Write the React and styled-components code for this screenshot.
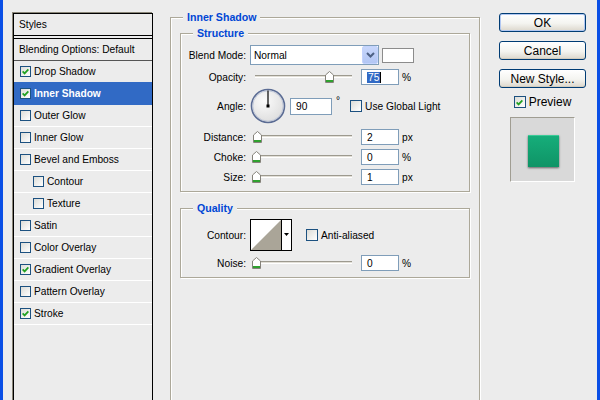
import React from "react"
import styled, { createGlobalStyle } from "styled-components"

// global
const GlobalStyle = createGlobalStyle`
  html, body {
    margin: 0;
    padding: 0;
    background: #ececec;
  }
  body {
    font-family: "Liberation Sans", Arial, sans-serif;
    font-size: 10.2px;
    color: #000;
  }
  * {
    box-sizing: border-box;
  }
`

// window frame
const Window = styled.div`
  display: flex;
  width: 600px;
  height: 400px;
  overflow: hidden;
  background: #ececec;
  border-left: 3px solid #0a4fe6;
  border-right: 3px solid #0a4fe6;
`

// styles list
const StylesColumn = styled.div`
  flex: none;
  padding: 13px 0 0 10px;
`
const ListPanel = styled.div`
  width: 140px;
  height: 420px;
  border: 1px solid #000;
  box-shadow: -1px -1px 0 #8a8678;
`
const ListHeader = styled.div`
  display: flex;
  align-items: center;
  height: 22px;
  padding-left: 5px;
  border-bottom: 1px solid #000;
  margin-bottom: 2px;
`
const ListBody = styled.div`
  border-top: 1px solid #000;
`
const ListItem = styled.div`
  display: flex;
  align-items: center;
  height: 22px;
  padding-left: ${p => (p.$plain ? 5 : p.$indent ? 19 : 6)}px;
  background: ${p => (p.$selected ? "#316ac5" : "transparent")};
  color: ${p => (p.$selected ? "#fff" : "#000")};
  font-weight: ${p => (p.$selected ? "bold" : "normal")};
  border-bottom: 1px solid
    ${p => (p.$plain ? "#555" : p.$selected ? "#316ac5" : "#fff")};
  box-shadow: ${p => (p.$selected ? "0 -1px 0 #316ac5" : "none")};
  span + span {
    margin-left: 3px;
  }
`

// checkbox
const Box = styled.span`
  display: inline-flex;
  align-items: center;
  justify-content: center;
  flex: none;
  width: ${p => p.$size}px;
  height: ${p => p.$size}px;
  border: 1px solid #1c5180;
  background: linear-gradient(135deg, #dcdcd7, #ffffff);
`
const Check = ({ checked, size = 12 }) => (
  <Box $size={size}>
    {checked && (
      <svg width="7" height="7" viewBox="0 0 7 7">
        <path
          d="M0.6 3.4 L2.6 5.4 L6.4 1.4"
          fill="none"
          stroke="#21a121"
          strokeWidth="1.8"
        />
      </svg>
    )}
  </Box>
)

// middle panel
const MainColumn = styled.div`
  flex: none;
  width: 310px;
  margin-left: 17px;
  padding-top: 17px;
`
const Group = styled.div`
  border: 1px solid #aca899;
  box-shadow: 1px 1px 0 #fff, inset 1px 1px 0 #fff;
  margin: ${p => p.$margin || "0"};
  padding-bottom: ${p => p.$bottom || 0}px;
  height: ${p => (p.$tall ? "420px" : "auto")};
`
const GroupTitle = styled.div`
  width: fit-content;
  margin: -8px 0 0 12px;
  padding: 0 4px;
  line-height: 14px;
  height: 14px;
  background: #ececec;
  color: #0046d5;
  font-weight: bold;
  font-size: 10.6px;
`
const Row = styled.div`
  display: flex;
  align-items: center;
  margin-top: ${p => p.$top}px;
  height: ${p => p.$height || 16}px;
`
const Label = styled.div`
  flex: none;
  width: 65px;
  margin-right: 4px;
  text-align: right;
`
const SelectBox = styled.div`
  display: flex;
  align-items: center;
  width: 129px;
  height: 20px;
  padding-left: 3px;
  border: 1px solid #7f9db9;
  background: #fff;
  span {
    flex: 1;
  }
`
const DropButton = styled.div`
  display: flex;
  align-items: center;
  justify-content: center;
  width: 16px;
  height: 18px;
  border: 1px solid #c3d3fd;
  border-radius: 2px;
  background: linear-gradient(#c7d6fb, #b2c6f4);
`
const Swatch = styled.div`
  width: 32px;
  height: 15px;
  margin-left: 3px;
  border: 1px solid #8c8c8c;
  background: #fff;
`
const SliderWrap = styled.div`
  position: relative;
  flex: none;
  width: 111px;
  height: 16px;
`
const Track = styled.div`
  margin: 6px 9px 0 5px;
  height: 3px;
  border-top: 1px solid #9d9a8f;
  background: #e2dfd7;
  border-bottom: 1px solid #fff;
`
const Thumb = styled.svg`
  position: absolute;
  top: ${p => p.$top}px;
`
const Field = styled.div`
  display: flex;
  align-items: center;
  flex: none;
  width: ${p => p.$width || 38}px;
  height: ${p => p.$height || 16}px;
  padding-left: 5px;
  border: 1px solid #7f9db9;
  background: #fff;
`
const Selected = styled.span`
  background: #316ac5;
  color: #fff;
  padding: 0 1px;
  line-height: 11px;
  border-right: 1px solid #000;
`
const Unit = styled.span`
  margin-left: 3px;
`
const Degree = styled.span`
  align-self: flex-start;
  margin: 8px 0 0 4px;
  line-height: 10px;
`
const CheckLabel = styled.label`
  display: flex;
  align-items: center;
  margin-left: ${p => p.$left}px;
  span + span {
    margin-left: 3px;
  }
`
const ContourPicker = styled.div`
  display: flex;
  width: 42px;
  height: 32px;
`

// right column
const ButtonColumn = styled.div`
  flex: none;
  display: flex;
  flex-direction: column;
  align-items: center;
  width: 87px;
  margin-left: 19px;
  padding-top: 13px;
  gap: 9px;
`
const Button = styled.button`
  width: 87px;
  height: 19px;
  padding: 0;
  font-family: inherit;
  font-size: 12px;
  color: #000;
  border: 1px solid #003c74;
  border-radius: 3px;
  background: linear-gradient(#ffffff, #f4f4f0 55%, #dcd7cc);
  box-shadow: ${p =>
    p.$primary ? "inset 0 0 0 1px #b2c8f2" : "inset 0 -1px 0 #d2ccbf"};
`
const PreviewCheck = styled(CheckLabel)`
  margin: -1px 0 0 0;
  height: 12px;
  font-size: 12px;
`
const PreviewBox = styled.div`
  display: flex;
  align-items: center;
  justify-content: center;
  width: 65px;
  height: 65px;
  border: 1px solid;
  border-color: #a09d92 #fff #fff #a09d92;
  background: #d9d9d9;
`
const GreenSquare = styled.div`
  width: 31px;
  height: 32px;
  margin: 3px 0 0 1px;
  border-top: 1px solid #3ccb98;
  background: linear-gradient(#16ad7a, #0f9466);
  box-shadow: 0 1px 2px rgba(0, 0, 0, 0.55);
`

const styleItems = [
  { name: "Drop Shadow", checked: true },
  { name: "Inner Shadow", checked: true, selected: true },
  { name: "Outer Glow" },
  { name: "Inner Glow" },
  { name: "Bevel and Emboss" },
  { name: "Contour", indent: true },
  { name: "Texture", indent: true },
  { name: "Satin" },
  { name: "Color Overlay" },
  { name: "Gradient Overlay", checked: true },
  { name: "Pattern Overlay" },
  { name: "Stroke", checked: true },
]

const Slider = ({ pct }) => (
  <SliderWrap>
    <Track />
    <Thumb
      $top={2}
      width="9"
      height="12"
      viewBox="0 0 9 12"
      style={{ left: 2 + pct * 97 }}
    >
      <path
        d="M0.5 4 L4.5 0.5 L8.5 4 V11.5 H0.5 Z"
        fill="#fff"
        stroke="#85827a"
      />
      <rect x="1" y="9" width="7" height="2" fill="#2fa12f" />
    </Thumb>
  </SliderWrap>
)

const SliderRow = ({ label, pct, value, unit, top }) => (
  <Row $top={top}>
    <Label>{label}</Label>
    <Slider pct={pct} />
    <Field>{value}</Field>
    <Unit>{unit}</Unit>
  </Row>
)

const Dial = () => (
  <svg width="36" height="36" viewBox="0 0 36 36">
    <defs>
      <radialGradient id="dialFill" cx="40%" cy="35%" r="70%">
        <stop offset="0" stopColor="#fbfbfb" />
        <stop offset="1" stopColor="#dcdcdc" />
      </radialGradient>
    </defs>
    <circle cx="18" cy="18" r="16.5" fill="url(#dialFill)" stroke="#5b6c94" strokeWidth="1.6" />
    <circle cx="18" cy="18" r="15.2" fill="none" stroke="#b9c2d6" strokeWidth="0.8" />
    <line x1="18" y1="18" x2="18" y2="2.5" stroke="#000" strokeWidth="1.2" />
    <rect x="16.5" y="16.5" width="3" height="3" fill="#000" />
  </svg>
)

const Contour = () => (
  <ContourPicker>
    <svg width="42" height="32" viewBox="0 0 42 32">
      <rect x="0.5" y="0.5" width="41" height="31" fill="#fff" stroke="#000" />
      <polygon points="1,31 31,1 31,31" fill="#aaa598" />
      <line x1="31.5" y1="0" x2="31.5" y2="32" stroke="#000" />
      <polygon points="34,14 39,14 36.5,17" fill="#000" />
    </svg>
  </ContourPicker>
)

export default function App() {
  return (
    <>
      <GlobalStyle />
      <Window>
        <StylesColumn>
          <ListPanel>
            <ListHeader>Styles</ListHeader>
            <ListBody>
              <ListItem $plain>Blending Options: Default</ListItem>
              {styleItems.map(item => (
                <ListItem
                  key={item.name}
                  $indent={item.indent}
                  $selected={item.selected}
                >
                  <Check checked={item.checked} size={11} />
                  <span>{item.name}</span>
                </ListItem>
              ))}
            </ListBody>
          </ListPanel>
        </StylesColumn>

        <MainColumn>
          <Group $tall>
            <GroupTitle>Inner Shadow</GroupTitle>
            <Group $margin="9px 9px 0" $bottom={6}>
              <GroupTitle>Structure</GroupTitle>
              <Row $top={5} $height={20}>
                <Label>Blend Mode:</Label>
                <SelectBox>
                  <span>Normal</span>
                  <DropButton>
                    <svg width="9" height="6" viewBox="0 0 9 6">
                      <path d="M1 1 L4.5 4.5 L8 1" fill="none" stroke="#4d6185" strokeWidth="2" />
                    </svg>
                  </DropButton>
                </SelectBox>
                <Swatch />
              </Row>
              <Row $top={4}>
                <Label>Opacity:</Label>
                <Slider pct={0.75} />
                <Field>
                  <Selected>75</Selected>
                </Field>
                <Unit>%</Unit>
              </Row>
              <Row $top={3} $height={36}>
                <Label>Angle:</Label>
                <Dial />
                <Field $width={42} $height={17} style={{ marginLeft: 4 }}>
                  90
                </Field>
                <Degree>°</Degree>
                <CheckLabel $left={10}>
                  <Check />
                  <span>Use Global Light</span>
                </CheckLabel>
              </Row>
              <SliderRow top={5} label="Distance:" pct={0.01} value="2" unit="px" />
              <SliderRow top={4} label="Choke:" pct={0} value="0" unit="%" />
              <SliderRow top={4} label="Size:" pct={0.005} value="1" unit="px" />
            </Group>

            <Group $margin="16px 9px 0" $bottom={6}>
              <GroupTitle>Quality</GroupTitle>
              <Row $top={4} $height={32}>
                <Label>Contour:</Label>
                <Contour />
                <CheckLabel $left={14}>
                  <Check />
                  <span>Anti-aliased</span>
                </CheckLabel>
              </Row>
              <SliderRow top={4} label="Noise:" pct={0} value="0" unit="%" />
            </Group>
          </Group>
        </MainColumn>

        <ButtonColumn>
          <Button $primary>OK</Button>
          <Button>Cancel</Button>
          <Button>New Style...</Button>
          <PreviewCheck>
            <Check checked />
            <span>Preview</span>
          </PreviewCheck>
          <PreviewBox>
            <GreenSquare />
          </PreviewBox>
        </ButtonColumn>
      </Window>
    </>
  )
}
